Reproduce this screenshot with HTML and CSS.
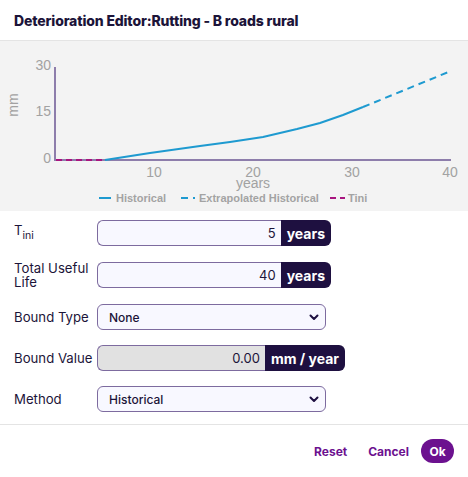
FILE: index.html
```html
<!DOCTYPE html>
<html lang="en">
<head>
    <meta charset="UTF-8">
    <title>Deterioration Editor</title>
    <link rel="stylesheet" href="styles.css">
</head>
<body>
    <div class="dialog">
        <header class="dialog-header">
            <h1>Deterioration Editor:Rutting - B roads rural</h1>
        </header>

        <div class="chart">
            <svg width="468" height="170" viewBox="0 0 468 170">
                <!-- axis labels -->
                <text class="tick" x="51" y="29" text-anchor="end">30</text>
                <text class="tick" x="51" y="75" text-anchor="end">15</text>
                <text class="tick" x="51" y="122" text-anchor="end">0</text>
                <text class="tick" x="154" y="136" text-anchor="middle">10</text>
                <text class="tick" x="253" y="136" text-anchor="middle">20</text>
                <text class="tick" x="352" y="136" text-anchor="middle">30</text>
                <text class="tick" x="450" y="136" text-anchor="middle">40</text>
                <text class="tick" x="253" y="147" text-anchor="middle">years</text>
                <text class="tick" transform="translate(18,64) rotate(-90)" text-anchor="middle">mm</text>

                <!-- axes -->
                <line x1="55" y1="26" x2="55" y2="120" class="axis"/>
                <line x1="55" y1="119" x2="451" y2="119" class="axis"/>

                <!-- series -->
                <line x1="56" y1="119" x2="105" y2="119" class="tini"/>
                <polyline class="hist" points="105,119 150,112 200,105 230,101 263,96 297,88 320,82 343,74 363,66"/>
                <line x1="363" y1="66" x2="451" y2="30" class="extra"/>

                <!-- legend -->
                <line x1="99" y1="157" x2="111" y2="157" class="hist"/>
                <text class="legend" x="116" y="161">Historical</text>
                <line x1="181" y1="157" x2="195" y2="157" class="extra"/>
                <text class="legend" x="199" y="161">Extrapolated Historical</text>
                <line x1="330" y1="157" x2="345" y2="157" class="tini"/>
                <text class="legend" x="348" y="161">Tini</text>
            </svg>
        </div>

        <div class="form">
            <div class="form-row">
                <label class="form-label">T<sub>ini</sub></label>
                <div class="input-group group-years">
                    <input type="text" value="5" readonly>
                    <span class="addon">years</span>
                </div>
            </div>
            <div class="form-row">
                <label class="form-label">Total Useful Life</label>
                <div class="input-group group-years">
                    <input type="text" value="40" readonly>
                    <span class="addon">years</span>
                </div>
            </div>
            <div class="form-row">
                <label class="form-label">Bound Type</label>
                <div class="select">
                    <span>None</span>
                    <svg width="10" height="7" viewBox="0 0 10 7"><path d="M1.5 1.5 L5 5 L8.5 1.5" fill="none" stroke="#1e1040" stroke-width="2" stroke-linecap="round" stroke-linejoin="round"/></svg>
                </div>
            </div>
            <div class="form-row">
                <label class="form-label">Bound Value</label>
                <div class="input-group group-rate">
                    <input type="text" value="0.00" class="disabled" readonly>
                    <span class="addon">mm / year</span>
                </div>
            </div>
            <div class="form-row">
                <label class="form-label">Method</label>
                <div class="select">
                    <span>Historical</span>
                    <svg width="10" height="7" viewBox="0 0 10 7"><path d="M1.5 1.5 L5 5 L8.5 1.5" fill="none" stroke="#1e1040" stroke-width="2" stroke-linecap="round" stroke-linejoin="round"/></svg>
                </div>
            </div>
        </div>

        <footer class="dialog-footer">
            <button class="link-button reset">Reset</button>
            <button class="link-button">Cancel</button>
            <button class="ok-button">Ok</button>
        </footer>
    </div>
</body>
</html>
```

FILE: styles.css
```css
* {
    margin: 0;
    padding: 0;
    box-sizing: border-box;
    font-family: 'Inter', 'Liberation Sans', sans-serif;
}

body {
    background: white;
    width: 468px;
    height: 477px;
    overflow: hidden;
}

.dialog {
    display: flex;
    flex-direction: column;
    height: 477px;
}

.dialog-header {
    height: 41px;
    padding: 0 14px;
    display: flex;
    align-items: center;
    border-bottom: 1px solid #e4e4e4;
}

.dialog-header h1 {
    font-size: 14px;
    font-weight: 800;
    color: #1c1439;
    letter-spacing: -0.15px;
}

.chart {
    background: #f3f3f3;
    height: 170px;
}

.chart svg {
    display: block;
}

.tick {
    font-family: 'Liberation Sans', sans-serif;
    font-size: 14px;
    fill: #a2a2a2;
}

.legend {
    font-family: 'Liberation Sans', sans-serif;
    font-size: 11px;
    font-weight: 700;
    fill: #a3a3a3;
}

.axis {
    stroke: #8d7dab;
    stroke-width: 2;
}

.hist {
    fill: none;
    stroke: #1e9ad0;
    stroke-width: 2;
}

.extra {
    stroke: #1e9ad0;
    stroke-width: 2;
    stroke-dasharray: 7 5;
}

.tini {
    stroke: #a8157f;
    stroke-width: 2;
    stroke-dasharray: 6 4;
}

.form {
    padding: 9px 14px 0;
    display: flex;
    flex-direction: column;
    gap: 15px;
    height: 213px;
}

.form-row {
    display: flex;
    align-items: center;
    min-height: 26px;
}

.form-label {
    width: 83px;
    font-size: 13.2px;
    line-height: 14px;
    color: #1c1439;
}

.form-label sub {
    font-size: 10.5px;
    vertical-align: -4px;
}

.input-group {
    display: flex;
    height: 26px;
}

.group-years {
    width: 234px;
}

.group-rate {
    width: 248px;
}

.input-group input {
    flex: 1;
    min-width: 0;
    border: 1px solid #7d6b9f;
    border-right: none;
    border-radius: 6px 0 0 6px;
    background: #f8f8ff;
    text-align: right;
    padding: 0 5px;
    font-size: 13px;
    color: #1c1439;
    outline: none;
}

.input-group input.disabled {
    background: #e1e1e1;
}

.addon {
    background: #1e1040;
    color: white;
    font-weight: 700;
    font-size: 14px;
    display: flex;
    align-items: center;
    padding: 0 6px;
    border-radius: 0 6px 6px 0;
}

.select {
    width: 229px;
    height: 26px;
    border: 1px solid #7d6b9f;
    border-radius: 6px;
    background: #f8f8ff;
    display: flex;
    align-items: center;
    justify-content: space-between;
    padding: 0 6px 0 11px;
    font-size: 12px;
    font-weight: 500;
    color: #1c1439;
}

.dialog-footer {
    flex: 1;
    border-top: 1px solid #e4e4e4;
    display: flex;
    align-items: center;
    justify-content: flex-end;
    gap: 12px;
    padding: 0 14px 0 0;
}

.link-button {
    background: none;
    border: none;
    color: #6c118f;
    font-weight: 700;
    font-size: 12px;
    cursor: pointer;
}

.link-button.reset {
    margin-right: 9px;
}

.ok-button {
    background: #6c118f;
    color: white;
    border: none;
    border-radius: 12px;
    font-weight: 700;
    font-size: 12px;
    width: 33px;
    height: 24px;
    cursor: pointer;
}
```
